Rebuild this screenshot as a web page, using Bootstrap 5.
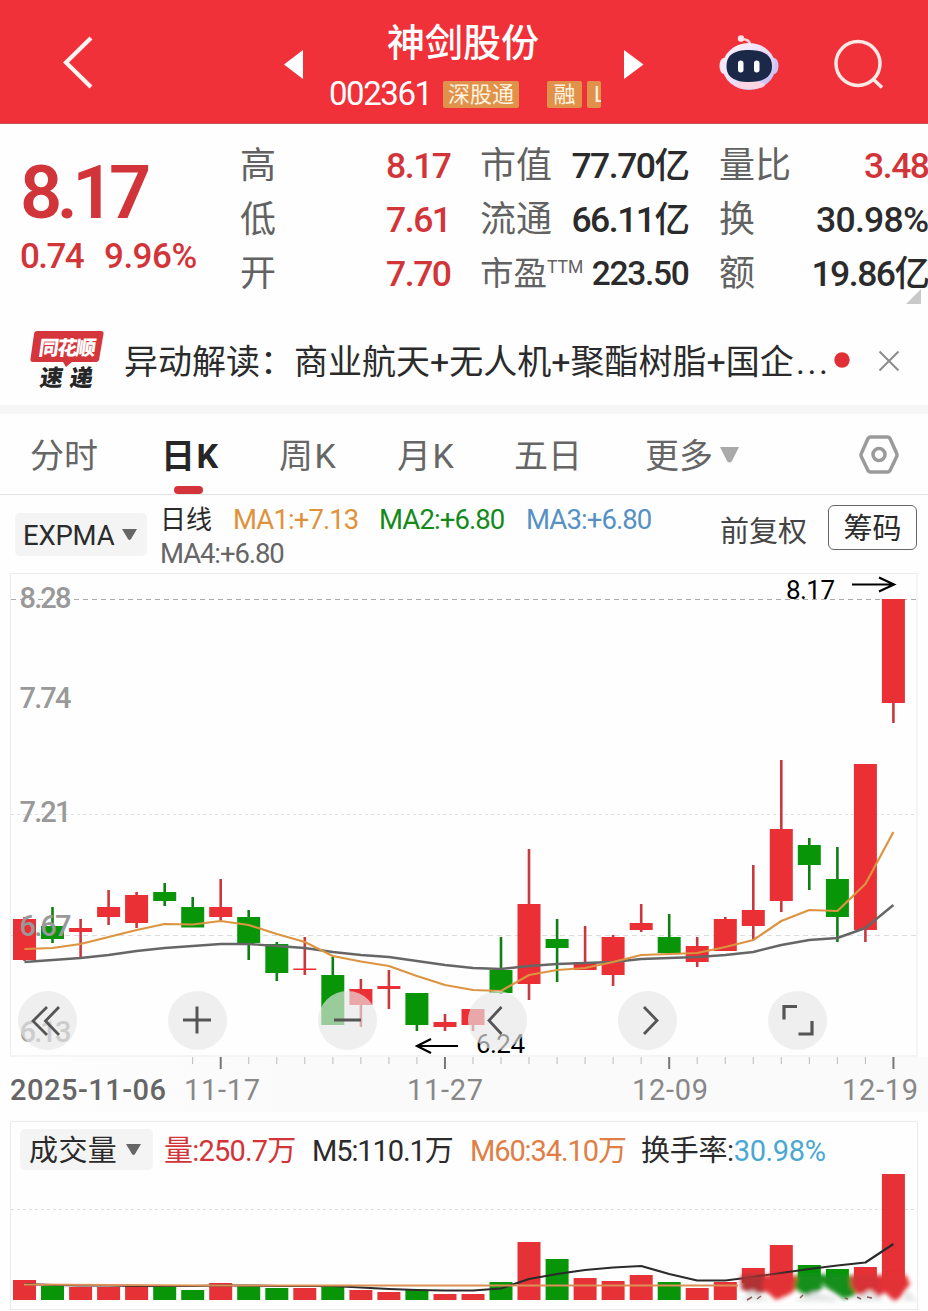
<!DOCTYPE html>
<html lang="zh-CN">
<head>
<meta charset="utf-8">
<meta name="viewport" content="width=device-width, initial-scale=1">
<title>神剑股份 002361</title>
<link href="https://cdn.jsdelivr.net/npm/bootstrap@5.3.0/dist/css/bootstrap.min.css" rel="stylesheet">
<style>
body{font-family:Roboto,"Noto Sans CJK SC",sans-serif;color:#2b2b2b;background:#fefefe;width:928px;height:1311px;overflow:hidden;line-height:1}
svg{display:block;flex:none}
.topbar{height:124px;background:#f03139;border-bottom:1px solid #c2555a;padding:0 44px 0 62px}
.stock-name{font-size:38px;font-weight:500;line-height:48px;padding-left:1px}
.stock-code{font-size:33px;letter-spacing:-1.45px;width:114px;line-height:34px}
.tagbox{background:#e0924a;color:#fff3e0;font-size:22px;height:27px;line-height:27px;border-radius:2px;overflow:hidden;white-space:nowrap}
.quote{height:191px;padding:15px 0 0 20px}
.up{color:#d23539!important}
.big-price{font-size:74px;font-weight:600;letter-spacing:-5.5px;line-height:80px;margin-top:14px}
.chg{font-size:35px;font-weight:500;letter-spacing:-1.6px;line-height:40px;margin-top:4px}
.stat{height:54px;line-height:54px;font-size:36px;color:#626262;white-space:nowrap}
.stat b{font-weight:500;font-size:35.5px;letter-spacing:-1.5px;color:#2b2b2b;margin-right:-.5px}
.stat sup{font-size:17.5px;top:-12px;line-height:0}
.news{height:90px;padding:4px 29px 0 30px;font-size:34px;white-space:nowrap}
.dots{letter-spacing:2.6px;margin-left:2px}
.band{height:9px;background:#f6f6f6}
.tabs{height:81px;border-bottom:1px solid #e4e4e4;font-size:34px;color:#666;padding:3px 29px 0 30px;line-height:78px;white-space:nowrap}
.tabs i{font-style:normal;margin-left:1.5px}
.tabs .on{color:#262626;font-weight:700;position:relative}
.tabs .on::after{content:"";position:absolute;left:13px;top:69px;width:29px;height:8px;border-radius:4px;background:#d5333a}
.indic{height:78px;padding-left:15px;padding-right:11px;line-height:34px;font-size:27.5px;white-space:nowrap}
.picker{background:#f4f4f4;border-radius:5px}
.ma{letter-spacing:-.9px}
.chip{border:1.5px solid #666;border-radius:6px;width:89px;height:45px;font-size:29px;line-height:46px}
.price-chart{height:539px}
.round-btn{width:59px;height:59px;border-radius:50%;background:rgba(230,230,230,.66)}
.tools{left:18px;top:418px;gap:91px}
.vol-frame{margin:9px 10px 0;height:189px;border:1px solid #ebebeb}
.vol-head{height:50px;padding:7px 0 0 9px;font-size:29px;white-space:nowrap;line-height:44px}
.vol-head span{letter-spacing:-1.1px}
</style>
</head>
<body>
<header class="topbar d-flex text-white position-relative">
  <svg width="32" height="56" style="margin-top:35px" viewBox="0 0 32 56" fill="none" stroke="#fff4f2" stroke-width="4.2"><path d="M29 3 4 27.500 29 52"/></svg>
  <svg width="21" height="30" style="margin:49px 0 0 189px" viewBox="0 0 21 30"><path d="M20 1v29L1 15.500z" fill="#fff"/></svg>
  <div style="width:272px;margin-left:25px;padding-top:19px">
    <div class="stock-name" style="margin-left:57px">神剑股份</div>
    <div class="d-flex align-items-center" style="margin-top:10px">
      <div class="stock-code">002361</div>
      <div class="tagbox text-center" style="width:76px">深股通</div>
      <div class="tagbox text-center" style="width:35px;margin-left:28px">融</div>
      <div class="tagbox" style="width:14px;margin-left:5px;padding-left:7px">L</div>
    </div>
  </div>
  <svg width="21" height="30" style="margin:49px 0 0 23px" viewBox="0 0 21 30"><path d="M0 1v29L19.500 15.500z" fill="#fff"/></svg>
  <svg width="60" height="58" style="margin:34px 0 0 74px" viewBox="0 0 60 58">
    <defs><linearGradient id="helmet" x1="0" y1="0" x2="1" y2="1"><stop offset="0" stop-color="#fff4fa"/><stop offset=".55" stop-color="#e9dcfa"/><stop offset="1" stop-color="#b9b4ee"/></linearGradient></defs>
    <path d="M31 11c0-5-4-6-9-6" fill="none" stroke="#ffd0dc" stroke-width="2.500"/><circle cx="22" cy="4.500" r="3.200" fill="#ffe2ea"/>
    <ellipse cx="5" cy="32" rx="4.500" ry="8" fill="#f6e6f8"/><ellipse cx="55" cy="32" rx="4.500" ry="8" fill="#cdc4f3"/>
    <ellipse cx="30" cy="32.500" rx="26.500" ry="23.500" fill="url(#helmet)"/><ellipse cx="31" cy="51" rx="15" ry="4" fill="#fbd5e4"/>
    <path d="M30 16c16 0 23 6 23 16s-7 16-23 16S7.500 42 7.500 32 14 16 30 16z" fill="#1b2848"/>
    <rect x="19" y="26.500" width="5.500" height="12" rx="2.700" fill="#fff"/><rect x="35" y="26.500" width="5.500" height="12" rx="2.700" fill="#fff"/>
  </svg>
  <svg width="52" height="52" style="margin:39px 0 0 54px" viewBox="0 0 52 52" fill="none" stroke="#ffe9e6" stroke-width="3.500"><circle cx="25" cy="24.500" r="22"/><path d="M40 40l9 8.500"/></svg>
</header>

<section class="quote d-flex position-relative">
  <div class="up" style="width:220px">
    <div class="big-price">8.17</div>
    <div class="chg d-flex"><span style="width:84px">0.74</span><span style="letter-spacing:-.5px">9.96%</span></div>
  </div>
  <div style="width:210px">
    <div class="stat d-flex justify-content-between">高<b class="up">8.17</b></div>
    <div class="stat d-flex justify-content-between">低<b class="up">7.61</b></div>
    <div class="stat d-flex justify-content-between">开<b class="up">7.70</b></div>
  </div>
  <div style="width:208px;margin-left:30px">
    <div class="stat d-flex justify-content-between">市值<b>77.70亿</b></div>
    <div class="stat d-flex justify-content-between">流通<b>66.11亿</b></div>
    <div class="stat d-flex justify-content-between"><span style="font-size:33.5px">市盈<sup>TTM</sup></span><b style="font-size:33.5px;letter-spacing:-1.3px">223.50</b></div>
  </div>
  <div style="width:209px;margin-left:31px">
    <div class="stat d-flex justify-content-between">量比<b class="up">3.48</b></div>
    <div class="stat d-flex justify-content-between">换<b style="letter-spacing:-.7px">30.98%</b></div>
    <div class="stat d-flex justify-content-between">额<b>19.86亿</b></div>
  </div>
  <svg class="position-absolute" style="right:7px;top:165px" width="15" height="15" viewBox="0 0 15 15"><path d="M15 0v15H0z" fill="#c9c9c9"/></svg>
</section>

<section class="news d-flex align-items-center">
  <svg width="74" height="62" viewBox="0 0 74 62" style="margin-top:-2px;overflow:visible;font-family:'Noto Sans CJK SC',sans-serif;font-weight:900">
    <path d="M7 1h64q3 0 2.500 3l-4.500 26q-.5 2-3 2H42l-6 5-3-5H3q-3 0-2.500-3L4 4q.5-3 3-3z" fill="#d4363b"/>
    <text transform="translate(8 24.500) skewX(-8)" font-size="20" textLength="57" fill="#fff">同花顺</text>
    <text transform="translate(9 56) skewX(-8)" font-size="23" textLength="53" fill="#262626">速递</text>
  </svg>
  <span style="margin-left:20px;width:707px">异动解读：商业航天+无人机+聚酯树脂+国企<span class="dots">...</span></span>
  <svg width="16" height="16" style="margin-left:3px;margin-top:-4px" viewBox="0 0 16 16"><circle cx="8" cy="8" r="7.700" fill="#e02f35"/></svg>
  <svg width="22" height="22" style="margin-left:28px;margin-top:-3px" viewBox="0 0 22 22" stroke="#8c8c8c" stroke-width="2"><path d="M1.500 1.500l19 19m0-19l-19 19"/></svg>
</section>
<div class="band"></div>

<nav class="tabs d-flex">
  <span style="width:131px">分时</span><span class="on" style="width:118px">日<i>K</i></span><span style="width:118px">周<i>K</i></span><span style="width:117px">月<i>K</i></span><span style="width:131px">五日</span><span style="width:75px">更多</span>
  <svg width="20" height="16" style="margin-top:30px" viewBox="0 0 20 16"><path d="M0 0h19l-7 14q-2.500 3-5 0z" fill="#aaa"/></svg>
  <svg width="40" height="40" class="ms-auto" style="margin-top:18px" viewBox="0 0 40 40" fill="none" stroke="#9a9a9a" stroke-width="3.500" stroke-linejoin="round"><path d="M11.500 2h17q1.500 0 2.500 1.500L37.500 18q1 2 0 4L31 35.500Q30 37 28.500 37h-17Q10 37 9 35.500L2.500 22q-1-2 0-4L9 3.500Q10 2 11.500 2z"/><circle cx="20" cy="19.500" r="6"/></svg>
</nav>

<section class="indic d-flex">
  <div class="picker d-flex align-items-center" style="width:132px;height:43px;margin-top:18px;padding-left:8px"><span style="width:99px;letter-spacing:-.2px;padding-top:2px">EXPMA</span><svg width="15" height="12" viewBox="0 0 15 12"><path d="M0 0h15L9 10q-1.500 2-3 0z" fill="#666"/></svg></div>
  <div style="margin:8px 0 0 13px;width:560px">
    <div class="d-flex"><span style="width:73px;font-size:26px">日线</span><span class="ma" style="width:146px;color:#e0923a">MA1:+7.13</span><span class="ma" style="width:147px;color:#158a1c">MA2:+6.80</span><span class="ma" style="color:#5591c4">MA3:+6.80</span></div>
    <div class="ma" style="color:#666;letter-spacing:-1.1px">MA4:+6.80</div>
  </div>
  <span style="font-size:29px;line-height:74px;width:108px;color:#444">前复权</span>
  <div class="chip text-center" style="margin-top:10px">筹码</div>
</section>

<section class="price-chart position-relative">
  <svg id="price" width="928" height="539" viewBox="0 573 928 539"></svg>
  <div class="tools d-flex position-absolute">
    <div class="round-btn"><svg viewBox="0 0 59 59" fill="none" stroke="#555" stroke-width="2.800"><path d="M29 16 15 30l14 14M41 16 27.500 30 41 44"/></svg></div>
    <div class="round-btn"><svg viewBox="0 0 59 59" fill="none" stroke="#555" stroke-width="3"><path d="M15 29h28M29 15.500v27"/></svg></div>
    <div class="round-btn"><svg viewBox="0 0 59 59" fill="none" stroke="#555" stroke-width="3"><path d="M16 29h27"/></svg></div>
    <div class="round-btn"><svg viewBox="0 0 59 59" fill="none" stroke="#555" stroke-width="2.800"><path d="M33.500 16 21 29.500 33.500 43"/></svg></div>
    <div class="round-btn"><svg viewBox="0 0 59 59" fill="none" stroke="#555" stroke-width="2.800"><path d="M26 16l13 13.500L26 43"/></svg></div>
    <div class="round-btn"><svg viewBox="0 0 59 59" fill="none" stroke="#555" stroke-width="3.200"><path d="M16 28.500V15.500h13M44 30v13H30.500"/></svg></div>
  </div>
</section>

<section class="vol-frame">
  <div class="vol-head d-flex">
    <div class="picker d-flex align-items-center" style="width:133px;height:41px;padding-left:9px;margin-right:11px"><span style="width:97px;letter-spacing:.4px;padding-top:2px">成交量</span><svg width="15" height="12" viewBox="0 0 15 12"><path d="M0 0h15L9 10q-1.500 2-3 0z" fill="#666"/></svg></div>
    <span class="up" style="width:148px;letter-spacing:-.8px">量:250.7万</span><span style="width:158px">M5:110.1万</span><span style="width:171px;color:#df7f45">M60:34.10万</span><span style="letter-spacing:-.3px">换手率:<span style="color:#4aa8d2;letter-spacing:-.4px">30.98%</span></span>
  </div>
  <svg id="volume" width="906" height="137" viewBox="11 1172 906 137"></svg>
</section>

<script>
const RED = '#ea3034', GREEN = '#089608', STEP = 28.03, X0 = 24.5, BODY = 23;
// colour, body top, body bottom, wick top, wick bottom, volume top
const days = [
 ['r',919,960,917,961,1280],['g',926,939,907,943,1286],['r',928,932,919,958,1287],['r',907,917,890,925,1287],
 ['r',895,923,892,928,1286],['g',892,901,883,906,1286],['g',907,927.5,897,927,1290],['r',907,917,879,921,1283],
 ['g',917,943,910,960,1285.5],['g',944,973,942,981,1288],['r',968.5,970,937,975,1288],['g',975,1025,957,1025,1287],
 ['r',989,1005,979,1027,1290],['r',986,989,970,1009,1292],['g',993,1025,993,1031,1290],['r',1022,1027,1014,1031,1294],
 ['r',1009,1025,1009,1031,1294],['g',970,993,937,994,1282],['r',904,984,849,1000,1242],['g',939,948,919,982,1259],
 ['r',962,970,926,970,1278],['r',937,975,935,986,1281],['r',923,930,904,932,1275],['g',937,953,914,954,1282],
 ['r',946,962,937,967,1288],['r',919,951,917,951,1282],['r',910,926,865,940,1268],['r',829,901,760,912,1245],
 ['g',845,865,838,890,1265],['g',879,917,847,942,1269],['r',764,930,764,942,1267],['r',599,703,599,723,1174]];
const fast = [949,948,944,937,930,924,924.5,921,925,934,942,956,961.5,966,976,985,990,991,975,970,968,962,955,954,953,947,940,921,910,911,884,832];
const slow = [962,960,958,955,951,948,946,944,944,946,948,952,955,957,961,965,968,969,966,964,963,962,959,958,957,955,952,945,940,938,928,905];
const vol5 = [1284,1285,1285.5,1285.5,1286,1286,1286,1285.5,1285.5,1286,1286,1286,1287.5,1289,1290,1290.5,1290.5,1288.5,1279,1274,1270,1267.5,1266,1274,1280.5,1280.5,1277,1273,1269,1265.5,1262.5,1244];
const cx = i => X0 + i * STEP;
const line = (ys, c, w) => `<polyline fill="none" stroke="${c}" stroke-width="${w}" stroke-linejoin="round" points="${ys.map((y,i)=>cx(i).toFixed(1)+','+y).join(' ')}"/>`;
const bar = (i, y, b, c) => `<rect x="${(cx(i)-BODY/2).toFixed(1)}" y="${y}" width="${BODY}" height="${b-y}" fill="${c}"/>`;
const label = (x, y, t, w, c, s, f) => `<text x="${x}" y="${y}" font-size="${s}" font-weight="${f||400}" textLength="${w}" fill="${c}">${t}</text>`;
const grid = (y, c, d) => `<path d="M11 ${y}H917" stroke="${c}" stroke-dasharray="${d}"/>`;

let p = `<defs><linearGradient id="shade" x1="0" x2="1" y1="0" y2="0"><stop offset="0" stop-color="#fefefe"/><stop offset=".3" stop-color="#fafafa"/></linearGradient></defs>
<rect x="10" y="1057" width="918" height="55" fill="url(#shade)"/><rect x="10.500" y="573.500" width="906.500" height="482.500" fill="none" stroke="#ebebeb"/>`;
p += grid(599.5,'#aaa','5 4') + grid(814.5,'#e0e0e0','3 3') + grid(935.5,'#dcdcdc','5 4');
days.forEach((d,i)=>{const c=d[0]=='r'?RED:GREEN;
  p += `<path d="M${cx(i).toFixed(1)} ${d[3]}V${d[4]}" stroke="${d[0]=='r'?'#c9383e':'#0e7f12'}" stroke-width="2.600"/>` + bar(i,d[1],d[2],c);
  if(i>5) p += i%8==7 ? `<path d="M${cx(i)} 1057v12" stroke="#777" stroke-width="2"/>` : `<path d="M${cx(i)} 1057v7" stroke="#bbb"/>`;});
p += line(slow,'#666',2.4) + line(fast,'#dc9440',2.2);
[['8.28',608],['7.74',708],['7.21',822],['6.67',936],['6.13',1042]].forEach(a=>p+=label(19.5,a[1],a[0],52,'#999',29,500));
p += label(786,599,'8.17',49,'#000',26) + label(476,1053,'6.24',49,'#000',26);
p += `<path d="M852 584.500h40M879 577.500l15 7-15 7M458 1046h-40M431 1039l-14 7 14 7" fill="none" stroke="#000" stroke-width="2.200"/>`;
p += label(10,1100,'2025-11-06',156,'#666',29,500) + label(184,1100,'11-17',76,'#888',29) + label(407,1100,'11-27',76,'#888',29) + label(632,1100,'12-09',76,'#888',29) + label(842,1100,'12-19',76,'#888',29);
document.getElementById('price').innerHTML = p;

let v = grid(1209.5,'#dedede','3 3');
days.forEach((d,i)=>v+=bar(i,d[5],1300,d[0]=='r'?'#e63236':GREEN));
v += line(vol5,'#2b2b2b',2.2) + `<path d="M24 1284.500 200 1285.500H738" fill="none" stroke="#dc9058" stroke-width="2.200"/>`;
// smeared strip at the foot of the last six bars
v += `<defs><filter id="soft" x="-10%" y="-60%" width="120%" height="220%"><feGaussianBlur stdDeviation="2.2"/></filter></defs>
<rect x="739" y="1283" width="178" height="19" fill="#fefefe"/><g filter="url(#soft)">
<path d="M741 1275h26l-2 17-10 3-14-6z" fill="#b03034"/><path d="M764 1275h30l8 9-12 10-14 6-14-12z" fill="#e33236"/>
<path d="M797 1274h27l-2 15-14 8-14-9z" fill="#178f1e"/><path d="M822 1275h28l6 20-12 4-20-13z" fill="#138e1a"/>
<path d="M851 1275h32l2 16-8 9-20-6-6-8z" fill="#d83237"/><path d="M880 1275h26l4 9-10 14-6 3-14-13z" fill="#e33236"/>
<path d="M740 1301l12-11 18 11zm54 0l20-9 18 4 7 6zm58 0l18-11 14 11zm50 0l6-11 9 11z" fill="#e6e8e8"/></g>
<path d="M747 1300l5-3m5 2 4-3m39 2 3-3m42 3 3 1m9-2 4 2m6-2 5 1" stroke="#8a5858" stroke-width="1.500"/>`;
document.getElementById('volume').innerHTML = v;
</script>
<script src="https://cdn.jsdelivr.net/npm/bootstrap@5.3.0/dist/js/bootstrap.bundle.min.js"></script>
</body>
</html>
